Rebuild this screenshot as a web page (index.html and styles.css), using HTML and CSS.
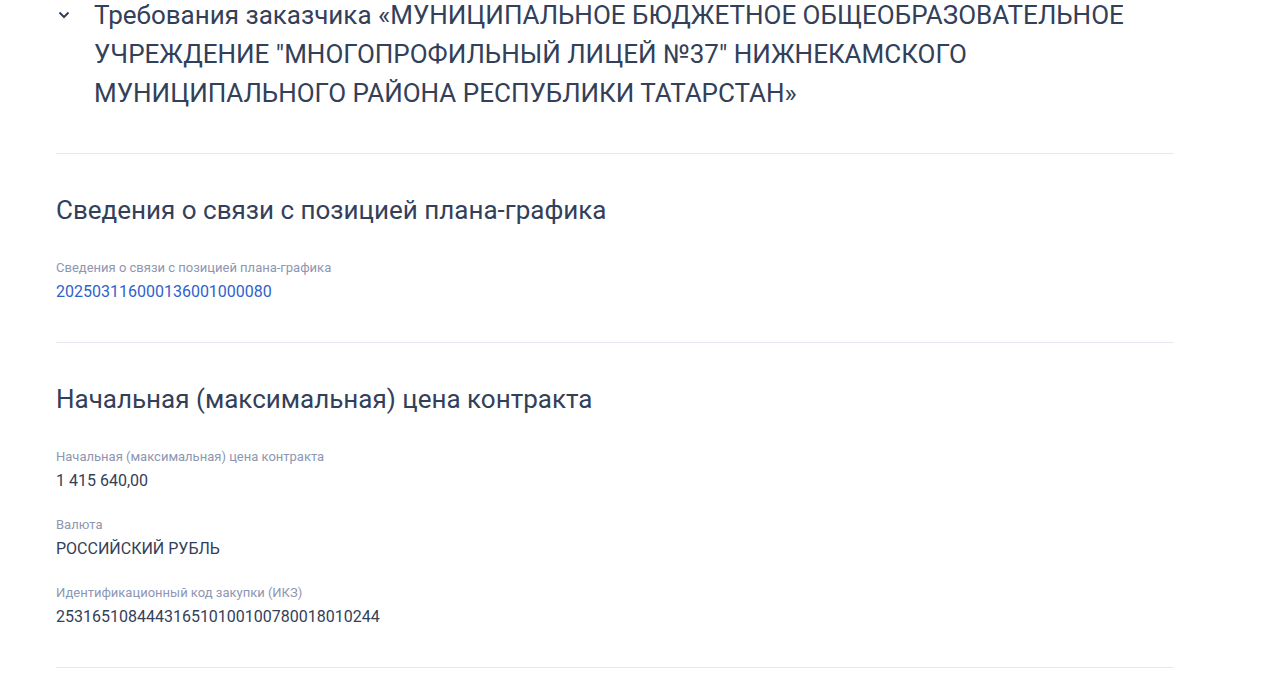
FILE: index.html
```html
<!DOCTYPE html>
<html lang="ru">
<head>
<meta charset="utf-8">
<link rel="stylesheet" href="styles.css">
</head>
<body>
<div class="page">
  <div class="customer">
    <span class="chevron">
      <svg width="12" height="8" viewBox="0 0 12 8"><path d="M1.5 1.5 L6 6 L10.5 1.5" fill="none" stroke="#334059" stroke-width="2"/></svg>
    </span>
    <h2 class="customer-title">Требования заказчика «МУНИЦИПАЛЬНОЕ БЮДЖЕТНОЕ ОБЩЕОБРАЗОВАТЕЛЬНОЕ УЧРЕЖДЕНИЕ "МНОГОПРОФИЛЬНЫЙ ЛИЦЕЙ №37" НИЖНЕКАМСКОГО МУНИЦИПАЛЬНОГО РАЙОНА РЕСПУБЛИКИ ТАТАРСТАН»</h2>
  </div>

  <section class="block">
    <h3 class="block-title">Сведения о связи с позицией плана-графика</h3>
    <div class="field">
      <div class="label">Сведения о связи с позицией плана-графика</div>
      <a class="value link" href="#">202503116000136001000080</a>
    </div>
  </section>

  <section class="block">
    <h3 class="block-title">Начальная (максимальная) цена контракта</h3>
    <div class="field">
      <div class="label">Начальная (максимальная) цена контракта</div>
      <div class="value">1 415 640,00</div>
    </div>
    <div class="field">
      <div class="label">Валюта</div>
      <div class="value">РОССИЙСКИЙ РУБЛЬ</div>
    </div>
    <div class="field">
      <div class="label">Идентификационный код закупки (ИКЗ)</div>
      <div class="value">253165108444316510100100780018010244</div>
    </div>
  </section>
  <div class="divider"></div>
</div>
</body>
</html>
```

FILE: styles.css
```css
html, body {
  margin: 0;
  padding: 0;
  background: #ffffff;
}
body {
  font-family: Roboto, "Noto Sans", sans-serif;
  color: #334059;
  overflow: hidden;
}
.page {
  width: 1118px;
  margin-left: 56px;
  margin-top: -4px;
}
.customer {
  display: flex;
  align-items: flex-start;
  padding-bottom: 40px;
}
.chevron {
  width: 38px;
  flex: none;
  display: flex;
  padding-top: 15px;
  padding-left: 2px;
  box-sizing: border-box;
}
.customer-title {
  margin: 0;
  font-size: 26px;
  line-height: 39px;
  font-weight: 400;
  color: #334059;
  width: 1060px;
}
.block {
  border-top: 1px solid #e6e8f1;
  padding: 40px 0 38px;
}
.block-title {
  margin: 0 0 32px;
  font-size: 26px;
  line-height: 32px;
  font-weight: 400;
  color: #334059;
}
.field {
  display: flex;
  flex-direction: column;
  align-items: flex-start;
}
.field + .field {
  margin-top: 22px;
}
.label {
  font-size: 13px;
  line-height: 20px;
  color: #8d96b2;
  margin-bottom: 2px;
}
.value {
  font-size: 16px;
  line-height: 24px;
  color: #334059;
}
.link {
  color: #2e62cc;
  text-decoration: none;
}
.divider {
  border-top: 1px solid #e6e8f1;
}
```
